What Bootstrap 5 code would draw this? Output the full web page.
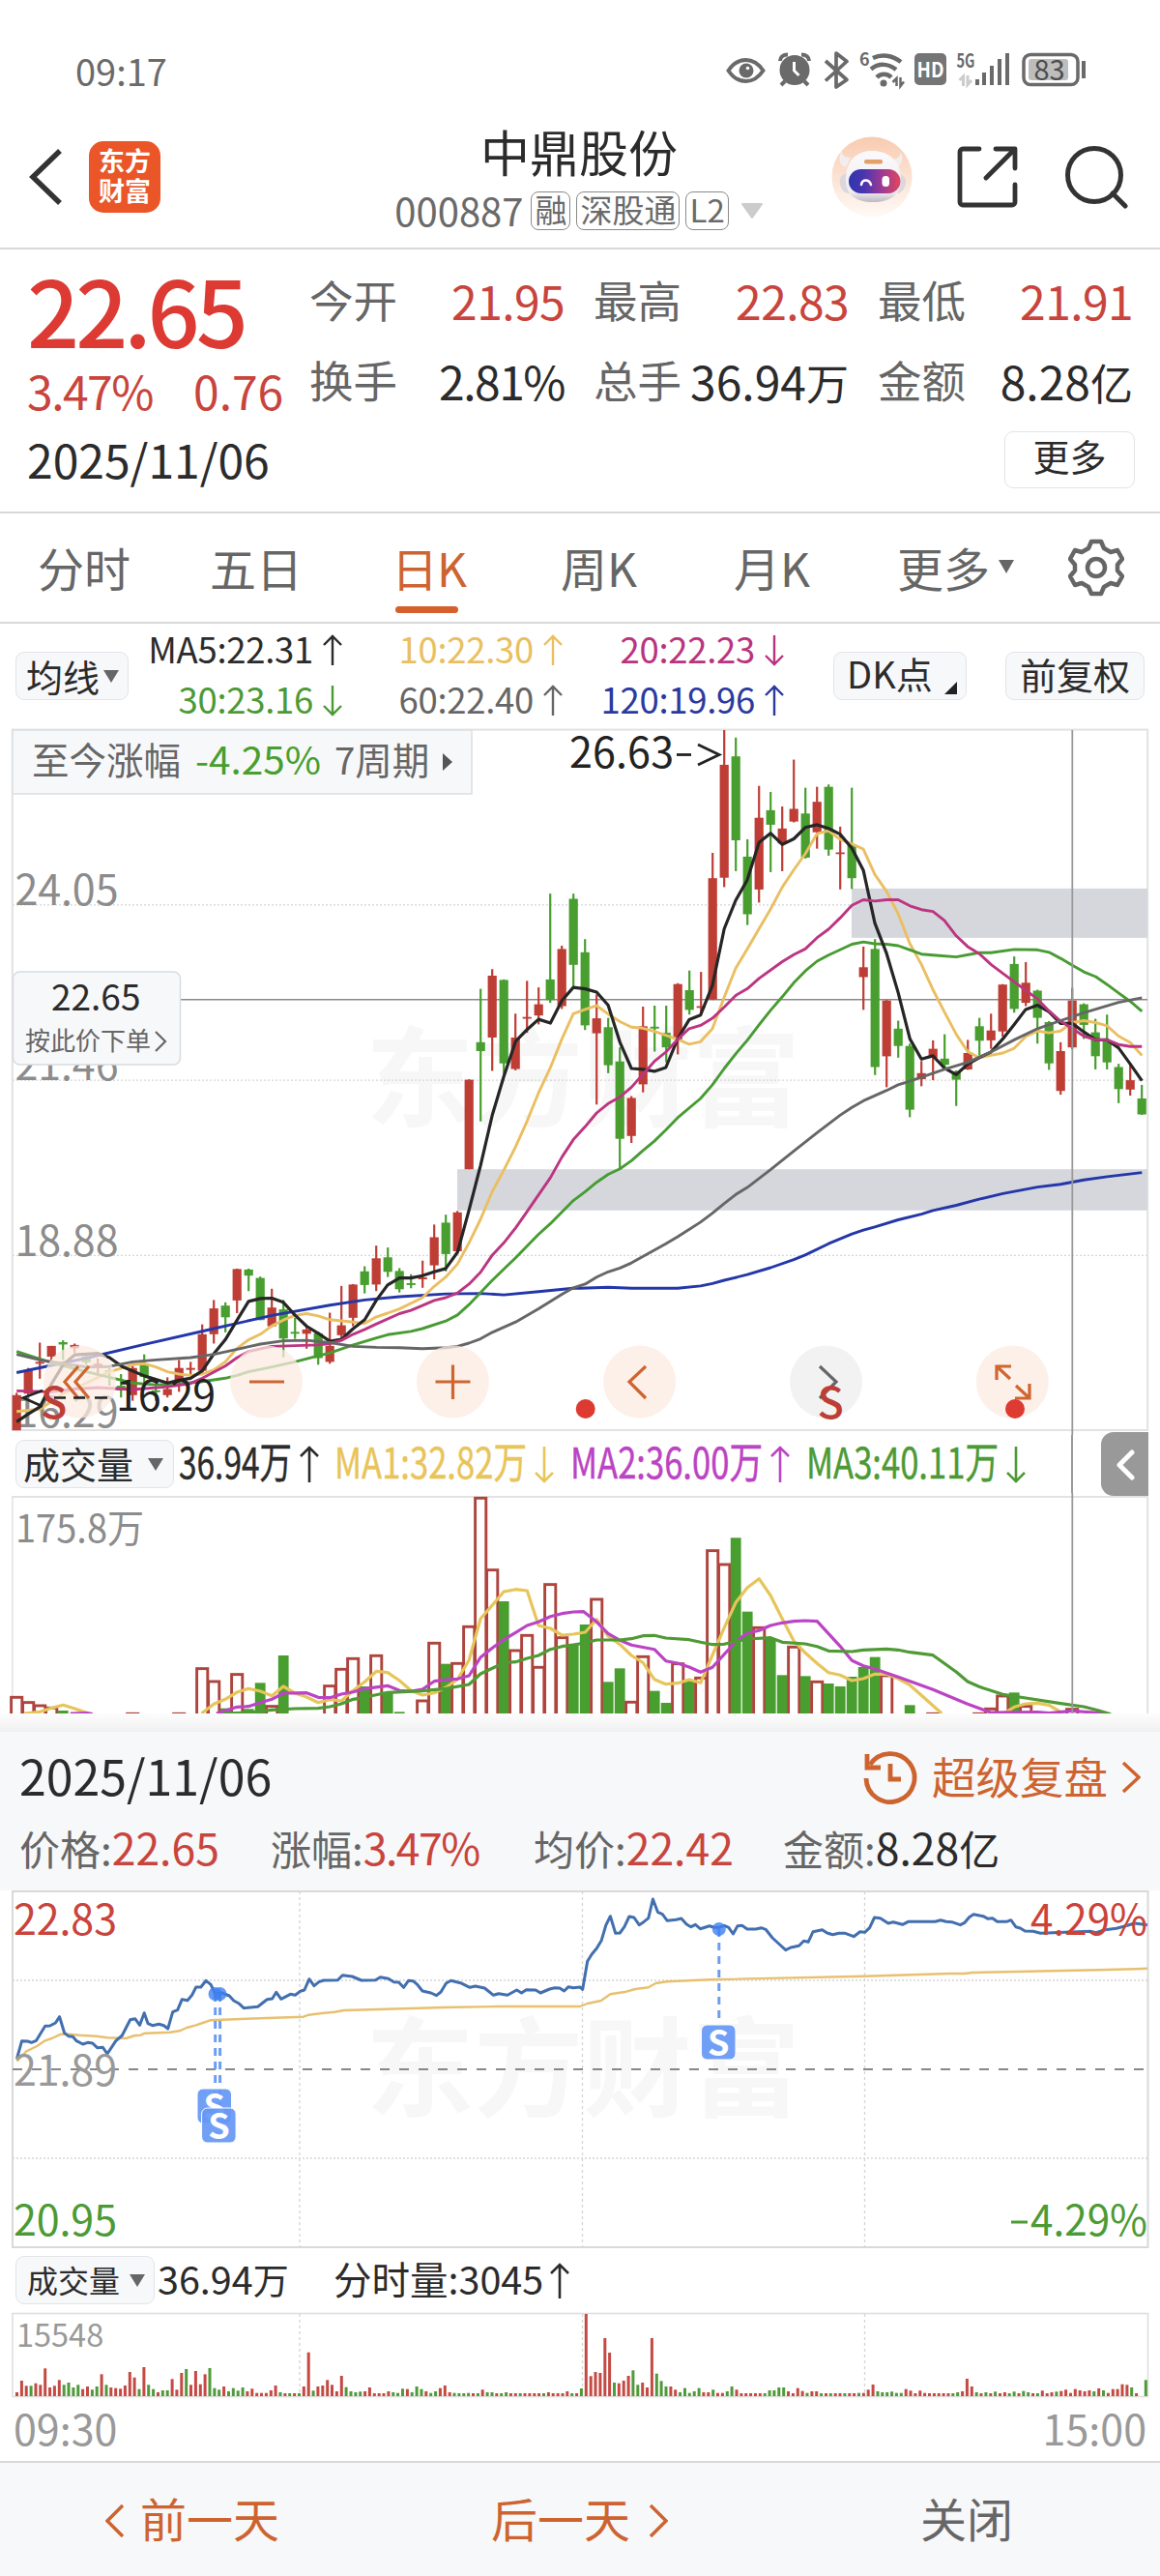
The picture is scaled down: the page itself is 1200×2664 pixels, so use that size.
<!DOCTYPE html>
<html lang="zh-CN">
<head>
<meta charset="utf-8">
<meta name="viewport" content="width=device-width, initial-scale=1">
<title>中鼎股份 000887</title>
<link href="https://cdn.jsdelivr.net/npm/bootstrap@5.3.0/dist/css/bootstrap.min.css" rel="stylesheet">
<script src="https://cdn.jsdelivr.net/npm/bootstrap@5.3.0/dist/js/bootstrap.bundle.min.js"></script>
<style>
:root{--up:#c8443c;--down:#4c9a35;--org:#cd6430;--ink:#2b2b2b;--gry:#666;--line:#d8d8d8;--soft:#f7f8fa}
body{width:1200px;margin:0;background:#fff;color:var(--ink);font-family:"Noto Sans CJK SC","Noto Sans",sans-serif;line-height:1;overflow-x:hidden}
svg{display:block;flex:none}
svg text{font-family:"Noto Sans CJK SC","Noto Sans",sans-serif}
.up{color:var(--up)}.down{color:var(--down)}.org{color:var(--org)}.gry{color:var(--gry)}
.status{height:100px;padding:50px 76px 0 78px;font-size:38px;color:#6a6a6a}
.head{height:158px;padding:10px 32px 0 30px;border-bottom:2px solid var(--line);display:grid;grid-template-columns:1fr auto 1fr}
.logo{width:74px;height:74px;border-radius:15px;background:#ea5628;color:#fff;font-size:27px;font-weight:700;line-height:31px;padding-top:4px;margin-left:27px}
.stock{font-size:51px;line-height:60px}
.code{font-size:40px;line-height:44px;color:#6a6a6a;padding-top:11px}
.code>span:first-child{margin-top:-2px}
.tagbox{font-size:33px;line-height:34px;height:40px;border:1.5px solid #8a8a8a;border-radius:8px;padding:0 3px;color:#6a6a6a}
.quote{height:273px;padding:5px 30px 0 28px;border-bottom:2px solid var(--line)}
.qleft{width:293px}
.price{font-size:95px;line-height:112px;height:110px;font-weight:500;letter-spacing:-4px;color:#dc3a33}
.chg{font-size:48px;line-height:61px;white-space:pre}
.pct{letter-spacing:-1.5px}
.qgrid{width:850px;display:grid;grid-template-columns:264px 264px 264px;column-gap:30px;padding-top:6px}
.cell{height:82px;font-size:48px}
.cell .up{letter-spacing:-.6px}
.cell span:first-child{font-size:45.5px;color:var(--gry)}
.cell small{font-size:44px}
.date{font-size:48px;margin-top:-4px}
.boxbtn{border:1.5px solid #e2e4e8;border-radius:9px;font-size:38px;height:50px;line-height:42px;background:var(--soft);color:var(--ink);padding:0}
.tabs{height:114px;font-size:48px;color:var(--gry);border-bottom:2px solid var(--line);padding-left:39px}
.tabs .tab{height:110px;line-height:110px;white-space:nowrap}
.tabs .on{position:relative;left:-3px;color:var(--org);letter-spacing:-1px}
.tabs .on::after{content:"";position:absolute;left:4px;bottom:7px;width:65px;height:7px;border-radius:4px;background:#d4602c}
.marow{height:105px;padding:0 16px}
.mag{display:grid;grid-template-columns:221px 228px 229px;grid-auto-rows:52px;font-size:36.5px;height:104px;letter-spacing:-.3px;padding-top:1px}
.mag div{display:flex;justify-content:flex-end;align-items:center;gap:10px;white-space:nowrap}
.volrow{height:60px;position:relative;padding-left:16px}
.volrow::after{content:"";position:absolute;left:1108px;top:0;width:2px;height:60px;background:#999}
.handle{width:49px;height:66px;border-radius:13px 0 0 13px;background:#999;margin-left:78px}
.fade-strip{height:19px;background:linear-gradient(#fdfdfd,#f0f0f0)}
.panel{height:164px;background:var(--soft);padding:0 20px}
.panel .t1{height:92px;font-size:50px}
.panel .t2{height:56px;font-size:44.5px;margin-top:-1px}
.t2 b{font-weight:400;font-size:42px;color:var(--gry)}
.t2 i{font-style:normal;font-size:42px}
.times{height:61px;font-size:43px;color:#999;padding:0 14px 9px 14px}
.foot{height:119px;background:var(--soft);border-top:2px solid var(--line);font-size:48px}
.foot>div{height:111px}
</style>
</head>
<body>
<div class="status d-flex justify-content-between">
  <div class="lh-1 pt-1">09:17</div>
  <svg width="374" height="44" viewBox="750 51 374 44" fill="none" stroke="#6a6a6a" stroke-width="4">
    <path d="M753.500 74c5-7.500 11-11 18-11s13 3.500 18 11c-5 7.500-11 11-18 11s-13-3.500-18-11z"/><circle cx="772" cy="74" r="7.500" fill="#6a6a6a" stroke="none"/><circle cx="773.500" cy="71.500" r="1.800" fill="#fff" stroke="none"/>
    <circle cx="822" cy="73.500" r="15.500" fill="#6a6a6a" stroke="none"/><path d="M807 64c0-4 3-6.500 8-6.500M837 64c0-4-3-6.500-8-6.500M812 85l-4 4M832 85l4 4"/><path d="M821.500 65v9l5 5" stroke="#fff" stroke-width="3"/>
    <path d="M854 64l22 19.500-11 7.500V56l11 8.500-22 20" stroke-width="3.700" stroke-linejoin="round"/>
    <path d="M903 61c9-4.500 20-3 29 4M901 72.500c8-6.500 18-6 26 .5M907 81c4-4.500 11-4.500 15 0" stroke-width="4.500"/><circle cx="914" cy="87" r="3.500" fill="#6a6a6a" stroke="none"/><path d="M927.500 90v-8l-4 4M931.500 81v9l3.500-4.500" stroke-width="2.500"/>
    <rect x="946" y="56" width="33" height="33" rx="5" fill="#757575" stroke="none"/>
    <path d="M996.500 90v-10l-4 4M1001 79v9.500l4-4.500" stroke="#ccc" stroke-width="3"/>
    <path d="M1011 83v6M1018 76v13M1026 69v20M1034 62v27M1042 56v33" />
    <rect x="1059" y="57.500" width="56" height="31" rx="7" stroke-width="3.500"/><rect x="1064" y="62" width="41" height="22" rx="3" fill="#bdbdbd" stroke="none"/><path d="M1121 64v18"/>
    <g stroke="none" fill="#6a6a6a"><text x="889" y="69" font-size="18" font-weight="700">6</text><text x="948.500" y="80.500" font-size="21" font-weight="700" fill="#fff" textLength="28" lengthAdjust="spacingAndGlyphs">HD</text><text x="989.500" y="70.500" font-size="19.500" font-weight="700" textLength="19" lengthAdjust="spacingAndGlyphs">5G</text><text x="1069.500" y="83.500" font-size="29" fill="#4d4d4d">83</text></g>
  </svg>
</div>

<div class="head">
  <div class="d-flex align-items-center">
    <svg width="35" height="60" viewBox="0 0 35 60" fill="none" stroke="#333" stroke-width="5.500"><path d="M32 3L4 30l28 27"/></svg>
    <div class="logo text-center">东方<br>财富</div>
  </div>
  <div class="text-center pt-3">
    <div class="stock">中鼎股份</div>
    <div class="code d-flex align-items-center gap-2"><span>000887</span><span class="tagbox">融</span><span class="tagbox" style="margin-left:-2px">深股通</span><span class="tagbox" style="margin-left:-2px">L2</span><svg class="ms-1" width="24" height="17" viewBox="0 0 24 17"><path d="M2 1h20L12 15z" fill="#ccc" stroke="#ccc" stroke-width="2" stroke-linejoin="round"/></svg></div>
  </div>
  <div class="d-flex align-items-center justify-content-end">
    <svg width="84" height="84" viewBox="0 0 84 84">
      <defs><linearGradient id="gp" x1="0" y1="0" x2="0" y2="1"><stop offset="0" stop-color="#f8cbb0"/><stop offset="1" stop-color="#fffaf6"/></linearGradient><linearGradient id="gv"><stop offset="0" stop-color="#2f36ad"/><stop offset=".3" stop-color="#4a35b0"/><stop offset=".65" stop-color="#a03a93"/><stop offset="1" stop-color="#e0475e"/></linearGradient><linearGradient id="gh" x1="0" y1="0" x2="0" y2="1"><stop offset="0" stop-color="#fbf9fb"/><stop offset=".8" stop-color="#f1eef2"/><stop offset="1" stop-color="#bdb8c0"/></linearGradient></defs>
      <circle cx="42" cy="42" r="41.500" fill="url(#gp)"/>
      <path d="M20 22c-7 0-9-3-9-7-4 6-4 14 4 17zM64 24c6-1 8-4 7-8 5 6 2 13-4 17z" fill="#f4edf0"/>
      <path d="M17 38c-7 1-9 5-8 11s4 10 10 10zM68 38c7 2 10 6 9 11s-4 9-9 10z" fill="#dcd7dd"/>
      <path d="M15 45C15 25 26 15 42 15s30 9 30 30c0 15-11 23-29 23S15 60 15 45z" fill="url(#gh)"/>
      <rect x="18" y="34" width="53.500" height="25" rx="12.500" fill="url(#gv)"/>
      <path d="M31 50c1-6 8-6 10 0" fill="none" stroke="#fff" stroke-width="2.500" stroke-linecap="round"/><rect x="52.500" y="41" width="7.500" height="11" rx="3.500" fill="#fff"/><rect x="34" y="24" width="19" height="4.500" rx="2" fill="#e3a068"/>
    </svg>
    <svg style="margin:0 49px 0 46px" width="63" height="64" viewBox="0 0 63 64" fill="none" stroke="#333" stroke-width="4.800" stroke-linejoin="round" stroke-linecap="round"><path d="M23 3H6a3 3 0 00-3 3v52a3 3 0 003 3h51a3 3 0 003-3V40M40 3h20v20M58 5L30 33"/></svg>
    <svg width="66" height="66" viewBox="0 0 66 66" fill="none" stroke="#333" stroke-width="5"><circle cx="30" cy="31" r="27.500"/><path d="M49 50l13 13" stroke-linecap="round"/></svg>
  </div>
</div>

<div class="quote">
  <div class="d-flex">
    <div class="qleft"><div class="price">22.65</div><div class="chg up d-flex"><span class="pct" style="width:172px">3.47%</span><span>0.76</span></div></div>
    <div class="qgrid">
      <div class="cell d-flex justify-content-between align-items-center"><span>今开</span><span class="up">21.95</span></div>
      <div class="cell d-flex justify-content-between align-items-center"><span>最高</span><span class="up">22.83</span></div>
      <div class="cell d-flex justify-content-between align-items-center"><span>最低</span><span class="up">21.91</span></div>
      <div class="cell d-flex justify-content-between align-items-center"><span>换手</span><span class="pct">2.81%</span></div>
      <div class="cell d-flex justify-content-between align-items-center"><span>总手</span><span>36.94<small>万</small></span></div>
      <div class="cell d-flex justify-content-between align-items-center"><span>金额</span><span>8.28<small>亿</small></span></div>
    </div>
  </div>
  <div class="d-flex justify-content-between align-items-center" style="height:84px;margin-right:-4px"><span class="date">2025/11/06</span><button class="boxbtn bg-white" style="width:135px;height:59px;line-height:46px;padding-bottom:8px;margin-top:-2px">更多</button></div>
</div>

<div class="tabs d-flex">
  <div class="tab" style="width:178px">分时</div><div class="tab" style="width:191px">五日</div><div class="tab on" style="width:172px">日K</div><div class="tab" style="width:179px">周K</div><div class="tab" style="width:169px">月K</div>
  <div class="tab d-flex align-items-center" style="width:177px">更多<svg class="ms-2" width="18" height="14"><path d="M1 0h16L9 14z" fill="#666"/></svg></div>
  <svg class="mt-4" width="58" height="64" viewBox="-29 -32 58 64" fill="none" stroke="#666" stroke-width="4.500" stroke-linejoin="round"><path d="M-5-27H5L8-20 15-16 22-18 27-9 22-3V3L27 9 22 18 15 16 8 20 5 27H-5L-8 20-15 16-22 18-27 9-22 3V-3L-27-9-22-18-15-16-8-20z"/><circle r="9"/></svg>
</div>

<div class="marow d-flex">
  <button class="boxbtn d-flex align-items-center" style="width:117px;margin-top:29px;padding-left:10px"><span>均线</span><svg class="ms-1" width="17" height="13"><path d="M0 0h16L8 13z" fill="#666"/></svg></button>
  <div class="mag" id="mag"></div>
  <button class="boxbtn d-flex" style="width:138px;margin:29px 0 0 51px;padding-left:13px"><span>DK点</span><svg style="margin:30px 0 0 12px" width="13" height="13"><path d="M13 0v13H0z" fill="#222"/></svg></button>
  <button class="boxbtn" style="width:144px;margin:29px 0 0 40px;padding-bottom:4px">前复权</button>
</div>

<svg id="kchart" width="1200" height="734" viewBox="0 750 1200 734"></svg>

<div class="volrow d-flex">
  <button class="boxbtn d-flex align-items-center" style="width:164px;margin-top:5px;padding-left:7px"><span style="margin-top:-3px">成交量</span><svg style="margin-left:15px" width="17" height="13"><path d="M0 0h16L8 13z" fill="#666"/></svg></button>
  <svg id="vlabels" width="881" height="60" viewBox="180 1484 881 60"></svg>
  <div class="handle position-relative z-1" style="margin-top:-3px"><svg width="49" height="66" fill="none" stroke="#fff" stroke-width="5" stroke-linecap="round" stroke-linejoin="round"><path d="M32 21L19 34l13 13"/></svg></div>
</div>
<svg id="vchart" width="1200" height="228" viewBox="0 1544 1200 228"></svg>
<div class="fade-strip"></div>

<div class="panel">
  <div class="t1 d-flex justify-content-between align-items-center"><span style="margin-top:-4px">2025/11/06</span>
    <span class="org d-flex align-items-center" style="font-size:45.500px;padding-top:2px"><svg width="56" height="56" viewBox="0 0 56 56" fill="none" stroke="#cd6430" stroke-width="4.800"><path d="M7 15a25 25 0 11-4 14"/><path d="M4 4v14h14M28 14v16h11"/></svg><span style="margin:-4px 14px 0 15px;line-height:50px">超级复盘</span><svg width="20" height="34" fill="none" stroke="#cd6430" stroke-width="3.500"><path d="M2 2l16 15L2 32"/></svg></span></div>
  <div class="t2 d-flex align-items-center">
    <div style="width:260px"><b>价格:</b><span class="up">22.65</span></div><div style="width:272px"><b>涨幅:</b><span class="up pct">3.47%</span></div><div style="width:258px"><b>均价:</b><span class="up">22.42</span></div><div><b>金额:</b>8.28<i>亿</i></div>
  </div>
</div>
<svg id="mchart" width="1200" height="373" viewBox="0 1955 1200 373"></svg>

<div class="d-flex align-items-center" style="height:60px;padding-left:16px;font-size:39.500px">
  <button class="boxbtn d-flex align-items-center" style="width:144px;padding-left:11px;font-size:32px"><span style="margin-top:-3px">成交量</span><svg style="margin-left:10px" width="17" height="13"><path d="M0 0h16L8 13z" fill="#666"/></svg></button>
  <span style="margin:-4px 0 0 3px;width:182px">36.94<small style="font-size:37px">万</small></span><span style="margin-top:-4px">分时量:3045</span>
  <svg style="margin-left:7px" width="20" height="38" fill="none" stroke="#2b2b2b" stroke-width="2.600"><path d="M10 38V3M1 12l9-9 9 9"/></svg>
</div>
<svg id="nchart" width="1200" height="96" viewBox="0 2388 1200 96"></svg>
<div class="times d-flex justify-content-between align-items-center"><span>09:30</span><span>15:00</span></div>

<div class="foot d-flex">
  <div class="org d-flex align-items-center" style="padding-left:109px;width:508px"><svg class="mt-2" width="20" height="36" fill="none" stroke="#cd6430" stroke-width="3.500"><path d="M18 2L2 18l16 16"/></svg><span style="margin-left:16px">前一天</span></div>
  <div class="org d-flex align-items-center" style="width:444px"><span style="margin-right:19px">后一天</span><svg class="mt-2" width="20" height="36" fill="none" stroke="#cd6430" stroke-width="3.500"><path d="M2 2l16 16L2 34"/></svg></div>
  <div class="gry d-flex align-items-center">关闭</div>
</div>

<script>
const R='#be3d35',G='#489e2e',$=id=>document.getElementById(id);
const SX=2.6133;
const txt=(x,y,s,f,c,o='')=>`<text x="${x}" y="${y}" font-size="${s}" fill="${c}" ${o}>${f}</text>`;
const line=(x1,y1,x2,y2,c,w=1.5,o='')=>`<path d="M${x1} ${y1}L${x2} ${y2}" stroke="${c}" stroke-width="${w}" ${o}/>`;
const rect=(x,y,w,h,c,o='')=>`<rect x="${x}" y="${y}" width="${w}" height="${h}" fill="${c}" ${o}/>`;
/* half-chart point lists -> polyline; the second half starts at x=600 */
function curve(a,b,oy,sy,c,w){
  const conv=(s,ox)=>s.trim().split(/\s+/).filter(Boolean).map(p=>{const[x,y]=p.split(',');return (ox+x/SX).toFixed(1)+','+(oy+y/sy).toFixed(1)});
  return `<polyline points="${conv(a,0).concat(conv(b,600)).join(' ')}" fill="none" stroke="${c}" stroke-width="${w}" stroke-linejoin="round"/>`;
}
const arrow=(x,y1,y2,up,c,w=2.6)=>`<path d="M${x} ${y1}V${y2}M${x-9} ${up?y1+10:y2-10}L${x} ${up?y1+1:y2-1}L${x+9} ${up?y1+10:y2-10}" fill="none" stroke="${c}" stroke-width="${w}"/>`;
$('mag').innerHTML=[['MA5:22.31',1,'#2b2b2b'],['10:22.30',1,'#e9bf61'],['20:22.23',0,'#b93480'],['30:23.16',0,'#4c9a35'],['60:22.40',1,'#666'],['120:19.96',1,'#2a3a9e']]
 .map(([t,u,c])=>`<div style="color:${c}"><span style="margin-top:-2px">${t}</span><svg width="20" height="34">${arrow(10,2,33,u,c,2.4)}</svg></div>`).join('');

/* candles: colour, high, body top, body bottom, low */
const K=`r1445,1450,1525,1525 r1392,1397,1447,1450 r1338,1379,1383,1415 r1345,1345,1368,1382 g1333,1337,1342,1375 r1340,1343,1350,1360 g1360,1367,1380,1385 r1372,1383,1386,1405 g1392,1397,1400,1430 g1405,1430,1440,1455 r1385,1392,1450,1462 g1363,1385,1411,1425 g1425,1440,1443,1462 r1412,1437,1450,1455 r1375,1392,1420,1443 r1379,1392,1396,1410 r1299,1320,1398,1402 r1247,1265,1320,1340 g1252,1259,1284,1316 r1180,1181,1248,1275 g1180,1182,1195,1228 g1197,1200,1290,1290 r1223,1263,1303,1305 g1247,1267,1329,1369 g1285,1315,1319,1330 r1302,1310,1319,1351 g1315,1318,1371,1385 r1274,1345,1379,1383 r1217,1301,1322,1330 r1213,1214,1285,1303 g1175,1186,1215,1233 r1131,1158,1214,1228 g1135,1156,1187,1198 g1179,1185,1224,1231 g1192,1211,1215,1222 r1163,1199,1203,1221 r1086,1113,1173,1203 g1065,1082,1149,1186 r1057,1060,1143,1145 r776,777,968,968 g583,697,716,866 r541,555,687,758 g563,564,742,765 r636,687,754,757 r566,643,646,677 r580,616,640,659 g380,563,607,613 r491,498,620,626 g380,391,532,580
g477,505,661,671 r595,646,678,830 g645,665,746,763 g708,738,903,966 r812,816,897,912 r621,663,787,804 g619,664,668,717 g619,677,708,740 r571,573,691,723 g544,586,628,638 r547,620,623,640 r293,347,606,607 r31,105,346,366 g47,87,266,332 g264,301,424,447 r150,218,371,399 g163,202,233,334 r194,241,273,332 r94,199,226,228 g154,209,303,305 r152,184,249,284 g147,152,286,299 r237,292,295,371 g154,275,347,370 r493,537,558,628 g477,498,750,767 r607,608,727,793 g651,668,705,730 g700,705,841,857 r737,763,776,791 r693,711,730,778 g680,732,745,752 g757,759,777,833 r692,720,755,756 g645,663,694,725 r636,672,693,711 r573,574,674,685 g514,530,626,634 r526,570,613,620 g585,587,645,700 g652,654,742,756 r697,716,801,809 r581,608,708,712 g614,616,660,690 g647,676,727,755 g638,694,740,755 g743,750,797,827 r745,778,798,811 g788,817,851,852`.split(/\s+/);
const ky=v=>740+v/2.0632, kx=i=>17.2+12.0*i;
const wm=(y)=>`<text x="378" y="${y}" font-size="112" font-weight="700" fill="#f7f7f7" textLength="450" lengthAdjust="spacingAndGlyphs">东方财富</text>`;
let s=wm(1157);
for(const v of[404,778,1152])s+=line(13,ky(v),1187,ky(v),'#d5d5d5',1.2,'stroke-dasharray="2 2"');
s+=rect(12.8,754.6,1174.4,724.4,'none','stroke="#e2e2e2" stroke-width="2"');
s+=rect(473,ky(968),714,42.6,'#d5d7dd')+rect(881,ky(369),306,51,'#d5d7dd');
s+=line(187,1033.7,1187,1033.7,'#8a8a8a',1.6);
for(const[y,t]of[[935.5,'24.05'],[1117,'21.46'],[1298.5,'18.88'],[1475.5,'16.29']])s+=txt(15.5,y,43,t,'#8c8c8c','textLength="107"');
K.forEach((k,i)=>{const c=k[0]=='r'?R:G,[h,a,b,l]=k.slice(1).split(',').map(ky),x=kx(i);
 s+=line(x.toFixed(1),h,x.toFixed(1),l,c,2.2)+rect((x-4.6).toFixed(1),a.toFixed(1),9.2,Math.max(1.8,b-a).toFixed(1),c)});
const C=(a,b,c,w=2.9)=>s+=curve(a,b,740,2.0632,c,w);
C('45,1402 234,1371 390,1342 578,1308 735,1280 892,1258 986,1247 1080,1240 1205,1234 1299,1233 1362,1236 1456,1229 1550,1222','0,1222 76,1220 139,1222 264,1222 326,1217 358,1212 390,1205 452,1193 515,1178 578,1161 609,1151 672,1127 735,1106 766,1098 797,1091 860,1076 923,1064 954,1056 1017,1045 1079,1032 1143,1020 1237,1006 1299,1000 1362,991 1425,984 1519,975','#2437a8');
C('45,1485 108,1480 171,1447 234,1424 296,1400 359,1385 390,1383 421,1390 453,1400 484,1405 515,1408 547,1405 578,1396 609,1379 641,1350 672,1332 704,1320 735,1302 766,1290 797,1280 829,1276 860,1281 892,1289 955,1294 986,1297 1018,1283 1048,1275 1080,1266 1142,1242 1174,1218 1205,1198 1237,1170 1268,1125 1299,1075 1331,1015 1362,970 1394,920 1425,865 1456,805 1488,751 1519,690 1550,636','14,627 45,619 76,637 108,653 139,665 170,667 201,674 232,682 264,691 295,701 326,696 358,668 390,601 421,539 452,498 484,455 515,413 547,366 578,329 609,295 641,252 672,246 703,264 735,274 766,285 797,339 829,375 860,423 892,487 923,531 954,585 985,632 1017,680 1048,717 1079,730 1111,725 1143,720 1174,710 1205,685 1237,673 1268,677 1299,673 1331,655 1362,651 1394,655 1425,662 1456,684 1488,698 1519,725','#eabf62');
C('45,1357 140,1381 234,1400 296,1412 359,1424 421,1428 484,1426 547,1421 609,1414 641,1408 672,1400 735,1390 797,1379 860,1366 892,1360 955,1343 1018,1328 1048,1321 1111,1314 1142,1308 1205,1292 1237,1279 1268,1257 1331,1205 1394,1157 1456,1107 1488,1084 1550,1035','14,1016 45,996 76,979 108,967 139,950 170,928 201,908 232,884 264,858 326,817 358,788 390,753 421,722 452,693 484,660 515,629 547,600 578,570 609,545 641,524 672,511 703,500 735,488 766,483 797,487 829,488 860,491 892,500 923,509 954,511 1017,515 1079,506 1111,506 1174,499 1237,500 1268,505 1299,518 1331,533 1362,547 1394,557 1425,574 1456,592 1488,610 1519,631','#489b33');
C('45,1507 77,1490 108,1475 140,1425 171,1385 202,1364 265,1361 296,1370 330,1389 390,1409 453,1424 484,1418 515,1414 547,1398 578,1362 609,1332 641,1290 672,1250 704,1244 735,1243 766,1252 797,1279 829,1303 860,1318 892,1335 923,1331 955,1308 986,1289 1018,1247 1048,1215 1080,1200 1111,1200 1142,1195 1174,1187 1205,1180 1237,1145 1268,1055 1299,960 1331,852 1362,770 1394,695 1425,670 1456,648 1488,656 1519,608 1550,580','14,583 45,590 76,618 108,697 139,753 170,755 201,759 232,751 264,690 295,649 326,639 358,576 390,455 421,394 452,351 484,271 515,251 547,275 578,263 609,239 641,233 672,241 703,253 735,283 766,330 797,443 829,508 860,591 892,690 923,733 954,726 985,752 1017,766 1048,744 1079,730 1111,718 1143,690 1174,659 1205,627 1237,618 1268,632 1299,657 1331,657 1362,675 1394,692 1425,692 1456,709 1488,744 1519,779','#262626',3.2);
C('45,1441 140,1443 202,1437 265,1434 359,1438 453,1432 515,1425 547,1414 609,1388 641,1370 672,1357 735,1346 860,1343 892,1340 923,1333 955,1320 986,1310 1018,1298 1080,1276 1111,1269 1142,1259 1174,1248 1205,1242 1237,1232 1268,1213 1299,1188 1331,1151 1362,1125 1394,1093 1425,1058 1488,986 1519,942 1550,905','14,877 45,848 76,828 108,814 139,793 201,738 232,718 264,691 295,668 326,661 358,646 390,622 421,597 452,583 484,561 547,525 578,510 609,498 641,474 672,456 703,432 735,405 766,393 797,396 829,393 860,393 892,406 923,414 954,418 985,437 1017,470 1048,493 1079,508 1111,531 1143,550 1174,568 1237,605 1268,630 1299,652 1331,668 1362,684 1394,692 1425,692 1456,702 1488,706 1519,706','#bc3581');
C('45,1363 108,1375 171,1383 234,1390 296,1389 359,1379 421,1375 515,1370 578,1363 641,1352 704,1341 766,1334 829,1333 892,1338 955,1346 1018,1348 1080,1349 1142,1351 1205,1349 1237,1346 1268,1339 1299,1330 1331,1316 1394,1294 1456,1266 1519,1235 1550,1221','14,1213 45,1198 76,1187 108,1179 139,1168 232,1127 264,1112 326,1081 358,1062 390,1041 421,1022 452,1007 515,969 578,929 641,890 703,853 735,836 766,822 829,800 860,788 892,780 985,755 1048,740 1111,718 1174,692 1237,668 1299,651 1362,634 1456,612 1519,602','#666');
s+=line(1109.3,755,1109.3,1484,'#999',1.8);
s+=txt(589,794,43,'26.63','#222','textLength="108"')+line(700,780.5,715,780.5,'#222',2.8)+'<path d="M722 770l22 10.500-22 10.500" fill="none" stroke="#222" stroke-width="2.800"/>';
/* round tool buttons */
[82.5,275.5,468.4,661.6,854.5,1047.3].forEach((x,i)=>s+=`<circle cx="${x}" cy="1429" r="37.500" fill="${i==4?'#eeeeee':'#fbebe1'}" fill-opacity=".75"/>`);
const o=(d,c='#cf6530')=>s+=`<path d="${d}" fill="none" stroke="${c}" stroke-width="3.200"/>`;
o('M258 1429h36M450.500 1429h36M468.500 1411.500v35.500M668 1413l-17 16 17 17');o('M848 1413l17 16-17 17','#666');
o('M81 1413l-14 16 14 17M92 1413l-14 16 14 17');
o('M1031 1427v-14h15M1031 1413l14 13M1051 1433l14 13M1065 1431v15h-15');
s+='<path d="M44 1438l-20 7.500 20 9M56 1445.500h12M76 1445.500h12M98 1445.500h13" fill="none" stroke="#222" stroke-width="2.600"/>'+txt(120,1459,43,'16.29','#222','textLength="103"');
s+=txt(42,1467,45,'S',R,'font-weight="500"')+txt(845.5,1467,45,'S',R,'font-weight="500"');
s+='<circle cx="605.700" cy="1457" r="10" fill="#dd3a31"/><circle cx="1050" cy="1457" r="10" fill="#dd3a31"/>';
/* summary strip and price tag */
s+=rect(13,755,475,66,'#f7f8fa','stroke="#dcdee2" stroke-width="1.500"')+txt(33,801,38.5,'至今涨幅','#666')+txt(202,801,39,'-4.25%',G,'textLength="130" lengthAdjust="spacingAndGlyphs"')+txt(346,801,38.5,'7周期','#666')+'<path d="M458 779v18l10-9z" fill="#555"/>';
s+=rect(13.5,1005,173,96,'#f7f8fa','rx="7" stroke="#d8dbe0" stroke-width="1.500"')+txt(53,1045,37,'22.65','#2b2b2b')+txt(26,1086,26,'按此价下单','#666')+'<path d="M161 1067l10 10-10 10" fill="none" stroke="#666" stroke-width="2.200"/>';
$('kchart').innerHTML=s;

s='';
[['36.94万',185,117,1,'#2b2b2b'],['MA1:32.82万',346,199,0,'#e9c459'],['MA2:36.00万',590,199,1,'#bb44c4'],['MA3:40.11万',834,199,0,'#4c9a35']].forEach(([t,x,w,u,c])=>{s+=txt(x,1528.5,44,t,c,`textLength="${w}" lengthAdjust="spacingAndGlyphs" stroke="${c}" stroke-width=".4"`)+arrow(x+w+18,1496,1533,u,c)});
$('vlabels').innerHTML=s;

/* daily volume */
const V='0r852 1r868 2r878 3r885 4g897 10r903 14r903 16r763 17r803 18g890 19r781 20g892 21g811 22r880 23g726 27r817 28r765 29r732 30g822 31r723 32g840 33g901 35r863 36r684 37g752 38r747 39r633 40r234 41r457 42g558 43r707 44r660 45r759 46r502 47r667 48g690 49g630 50r548 51g808 52g766 53r867 54r726 55g836 56g873 57r748 58g805 59r792 60r397 61r440 62g361 63g590 64r636 65g672 66g787 67r696 68g790 69r804 70g813 71g822 72g792 73g762 74g731 75r785 77g880 79r903 83r903 84r888 85r848 86g841 87r880 91r889'.split(' ');
const vy=v=>1470+v/3;
s=line(12,1548,1188,1548,'#e2e2e2',2)+line(12.8,1548,12.8,1772,'#e2e2e2')+line(1187.2,1548,1187.2,1772,'#e2e2e2',2)+txt(16,1595,40,'175.8万','#8c8c8c','textLength="133" lengthAdjust="spacingAndGlyphs"');
V.forEach(v=>{const[,i,c,t]=v.match(/(\d+)([rg])(\d+)/),x=kx(+i),y=vy(+t);s+=c=='g'?rect(x-5.4,y,10.8,240,G):rect(x-5.6,y+1.3,11.2,240,'#fff','stroke="#ae443d" stroke-width="2.900"')});
const D=(a,b,c)=>s+=curve(a,b,1470,3,c,3.2);
D('65,906 108,901 140,889 171,880 202,891 240,906','','#e6c55a');
D('545,906 578,877 609,862 641,840 672,829 704,837 735,851 766,822 797,843 829,855 860,872 892,863 923,867 955,835 986,808 1018,775 1048,779 1080,804 1111,835 1142,849 1174,842 1205,826 1237,800 1268,740 1299,612 1331,570 1362,528 1394,521 1425,525 1456,633 1488,642 1519,663 1550,660','14,654 45,614 76,666 108,692 139,726 170,748 201,800 232,815 264,812 295,801 326,811 358,725 390,640 421,562 452,516 484,488 515,540 547,613 578,681 609,718 641,751 672,779 703,787 735,804 766,798 797,784 829,784 860,798 892,818 923,850 978,906','#e6c55a');
D('','1145,906 1174,886 1205,876 1237,874 1268,880 1300,902','#e6c55a');
D('190,906 235,905 250,908','','#bb44c4');
D('585,906 641,886 672,884 704,872 735,862 766,843 829,842 860,856 892,857 923,846 955,839 986,829 1048,820 1080,835 1111,837 1142,831 1174,806 1205,801 1237,799 1268,789 1299,732 1331,703 1362,677 1394,655 1425,633 1456,622 1488,605 1519,596 1550,591','10,590 45,622 76,658 108,679 139,694 201,707 232,743 264,750 295,762 326,778 358,763 421,683 452,657 484,649 515,633 547,625 578,620 609,618 641,620 703,697 735,742 766,758 797,768 860,793 954,832 1048,877 1110,903 1237,902 1268,905 1331,898 1425,906','#bb44c4');
D('605,906 672,903 735,895 797,891 860,890 892,885 923,876 955,862 986,856 1048,841 1142,836 1205,829 1268,816 1299,783 1331,766 1362,749 1394,746 1425,735 1456,726 1488,707 1519,698 1550,693','14,687 45,678 108,678 139,674 170,665 201,664 232,672 295,677 326,685 358,692 390,691 452,675 515,671 547,685 609,690 641,698 672,712 735,714 766,709 829,706 860,709 892,716 954,725 1017,777 1048,807 1079,823 1143,847 1205,858 1299,875 1362,885 1400,896 1435,908','#4f9a35');
s+=line(1109.3,1544,1109.3,1772,'#999',1.8);
$('vchart').innerHTML=s;

/* intraday */
s=wm(2181)+rect(13,1956,1174.5,368,'none','stroke="#d9d9d9" stroke-width="2"');
for(const y of[2048,2232])s+=line(13,y,1187,y,'#d5d5d5',1.3,'stroke-dasharray="2 2"');
for(const x of[310,602.5,894.5])s+=line(x,1956,x,2324,'#d5d5d5',1.3,'stroke-dasharray="3 3"');
s+=line(13,2140,1187,2140,'#888',2,'stroke-dasharray="10 10"');
const E=(a,b,c,w)=>s+=curve(a,b,1940,3,c,w);
E('46,575 70,545 100,528 122,511 140,504 165,491 185,491 215,494 260,497 290,502 340,504 365,495 380,494 392,488 460,485 485,481 505,471 530,463 548,456 568,448 650,444 820,437 835,431 870,426 905,422 930,417 1000,415 1200,408 1350,405','0,405 20,396 57,387 82,367 125,359 150,351 185,346 205,333 235,328 350,322 770,311 1000,303 1040,303 1060,300 1400,292 1500,289 1534,287','#e8c06f',2.4);
E('46,565 59,512 75,513 85,517 98,511 122,466 135,465 150,456 161,437 174,487 185,497 197,499 207,512 224,522 237,517 250,519 263,533 278,532 290,552 313,512 330,495 352,446 365,443 378,463 390,425 400,458 412,464 430,460 443,464 454,474 467,422 480,416 492,383 507,386 519,370 530,345 543,345 557,325 570,337 582,366 600,363 620,372 632,387 645,395 659,410 697,406 722,383 736,381 747,361 760,382 785,367 798,370 812,358 823,354 836,320 849,341 862,329 875,324 913,323 926,308 952,312 977,324 1015,323 1028,314 1050,319 1065,329 1078,330 1091,346 1104,325 1117,326 1129,338 1142,357 1165,363 1180,371 1192,360 1206,333 1219,325 1245,332 1270,346 1285,342 1310,348 1334,370 1348,365 1372,370 1397,354 1410,363 1423,353 1448,354 1461,363 1486,351 1500,347 1513,348 1525,357 1537,344 1550,347','0,345 7,352 20,265 32,243 45,225 58,200 70,153 82,125 96,178 108,177 120,158 133,126 146,129 160,152 172,143 185,131 197,72 210,112 223,119 236,139 260,136 274,132 288,150 300,158 312,151 325,164 350,155 363,160 376,160 390,154 402,160 414,180 426,155 438,154 452,165 475,165 490,161 502,166 520,192 540,213 556,230 570,222 592,217 605,202 617,205 630,173 655,167 668,177 683,182 700,178 717,178 740,188 757,173 770,175 783,161 796,129 812,131 833,147 847,143 872,151 887,142 960,142 975,137 990,142 1005,143 1028,152 1040,145 1052,128 1064,119 1090,125 1103,133 1115,131 1128,142 1153,142 1165,137 1178,158 1190,162 1203,171 1225,172 1245,178 1380,172 1395,176 1420,167 1450,163 1470,157 1500,147 1534,152','#426faf',3);
s+=txt(14,2001,43,'22.83','#c8443c','textLength="107"')+txt(14,2156.5,43,'21.89','#999','textLength="107"')+txt(14,2311.5,43,'20.95','#4c9a35','textLength="107"')+txt(1066,2001,43.5,'4.29%','#cc423a','textLength="121" lengthAdjust="spacingAndGlyphs"')+txt(1066,2311.5,43.5,'4.29%','#4c9a35','textLength="121" lengthAdjust="spacingAndGlyphs"')+line(1046,2298,1063,2298,'#4c9a35',3);
const dsh='stroke-dasharray="8 6"';
s+=line(222.7,2062,222.7,2158,'#6c9df0',3,dsh)+line(227.6,2062,227.6,2180,'#6c9df0',3,dsh)+line(743.8,1995,743.8,2089,'#6c9df0',3,dsh);
s+='<g fill="#3f7ff0" fill-opacity=".8"><circle cx="222.500" cy="2062" r="7"/><circle cx="227.500" cy="2062" r="7"/><circle cx="743.800" cy="1995" r="7"/></g>';
for(const[x,y]of[[204,2160],[208.6,2180],[725.5,2094]])s+=rect(x,y,35.5,36,'#6698f4','rx="6" stroke="#fff" stroke-width="1" fill-opacity=".93"')+txt(x+17.8,y+31.5,36,'S','#fff','text-anchor="middle" font-weight="700"');
$('mchart').innerHTML=s;

/* minute volume: negative = falling minute */
const N=[12,48,32,-32,40,35,86,27,32,50,-35,-42,-27,-35,22,30,-20,-30,68,-35,27,25,23,33,75,58,-22,90,-35,-22,12,-18,-18,53,20,72,-84,35,78,37,68,-87,-25,-20,30,-15,-25,-17,-27,15,23,10,10,10,18,33,-12,9,-9,9,-9,30,136,-17,30,33,50,35,15,63,-28,-15,-12,-14,15,27,9,9,9,15,-12,-10,-23,22,-12,-30,-22,15,-10,-15,25,33,12,-10,-9,-9,-10,9,-9,20,-12,-12,9,-9,-12,9,9,-9,9,9,9,9,-9,12,9,9,9,15,-9,9,-24,255,62,75,72,180,135,-42,40,48,63,-80,-35,42,27,180,-70,-47,-30,30,20,-12,-25,-10,-15,-25,12,12,-20,10,10,-15,-30,20,9,9,9,9,9,-9,-18,-18,-27,-27,15,9,25,16,-10,15,15,-9,9,-9,9,9,-9,9,9,-10,10,20,36,-15,-12,-12,-14,-10,-10,22,17,9,17,10,9,9,9,9,9,-9,-12,15,54,30,-12,9,-12,9,-14,9,12,-9,-14,9,-16,-12,9,-9,17,9,12,-14,16,20,10,22,18,15,18,-15,24,-18,10,22,22,37,35,-27,9,0,-50];
s=rect(13,2392.5,1174.5,86,'none','stroke="#dedede" stroke-width="1.600"');
for(const x of[310,602.5,894.5])s+=line(x,2393,x,2478,'#d5d5d5',1.3,'stroke-dasharray="3 3"');
s+=txt(17,2427,32.5,'15548','#999');
N.forEach((v,i)=>{const h=Math.abs(v)/3;s+=rect((16+4.866*i).toFixed(1),(2478-h).toFixed(1),3,h.toFixed(1),v<0?'#4f9a3a':'#c44a43')});
$('nchart').innerHTML=s;
</script>
</body>
</html>
